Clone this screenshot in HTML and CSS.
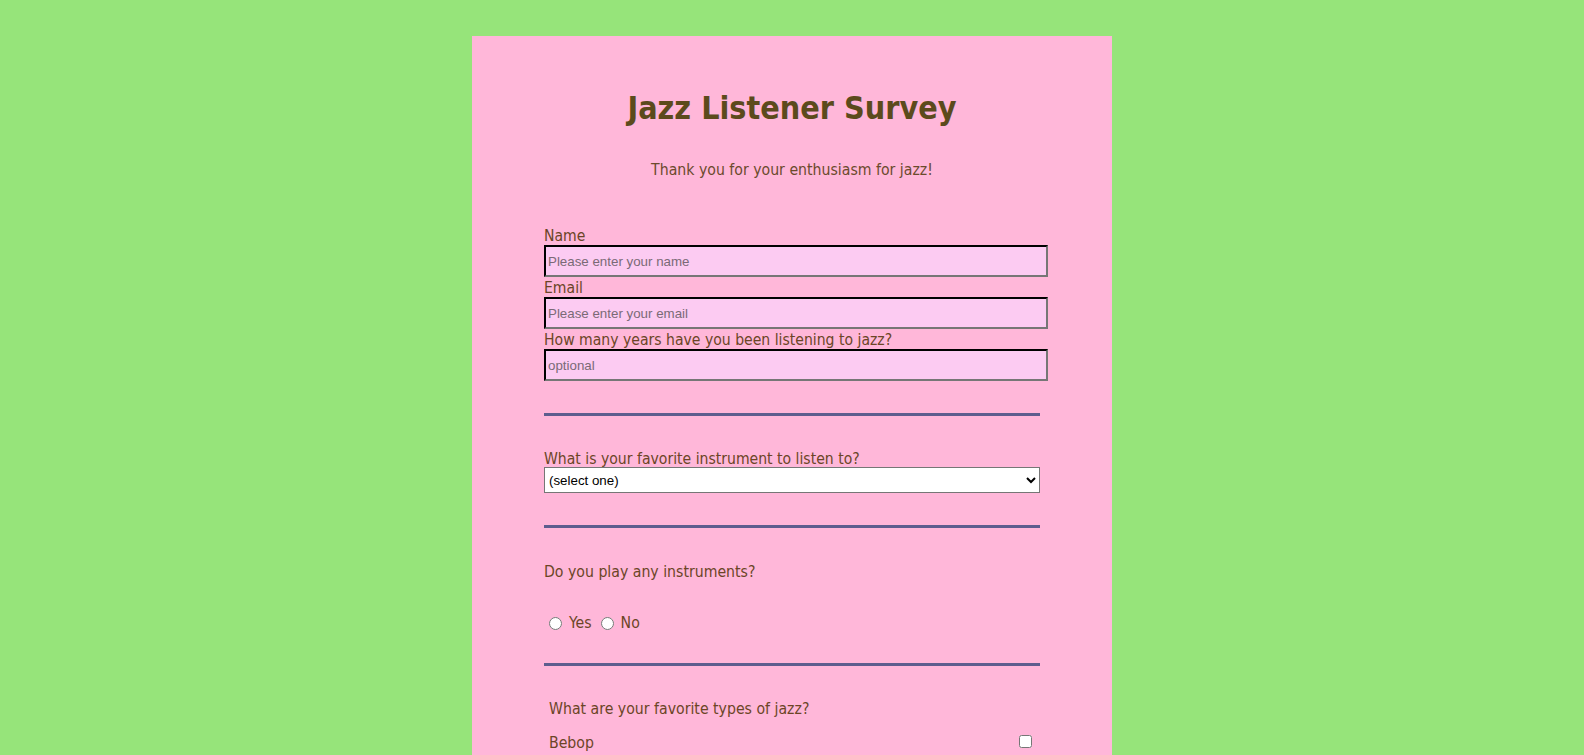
FILE: index.html
```html
<!DOCTYPE html>
<html lang="en">
<head>
<meta charset="utf-8">
<title>Jazz Listener Survey</title>
<link rel="stylesheet" href="styles.css">
</head>
<body>
<main class="card">
  <h1 class="title">Jazz Listener Survey</h1>
  <p class="subtitle">Thank you for your enthusiasm for jazz!</p>
  <form class="survey">
    <label class="label" for="name">Name</label>
    <input class="text-input" id="name" type="text" placeholder="Please enter your name">
    <label class="label" for="email">Email</label>
    <input class="text-input" id="email" type="email" placeholder="Please enter your email">
    <label class="label" for="years">How many years have you been listening to jazz?</label>
    <input class="text-input" id="years" type="number" placeholder="optional">

    <hr class="divider">

    <label class="label" for="instrument">What is your favorite instrument to listen to?</label>
    <select class="select" id="instrument">
      <option>(select one)</option>
      <option>Saxophone</option>
      <option>Trumpet</option>
      <option>Piano</option>
    </select>

    <hr class="divider">

    <p class="question">Do you play any instruments?</p>
    <div class="radio-row">
      <input class="radio" type="radio" name="plays" id="yes"><label class="radio-label" for="yes">Yes</label>
      <input class="radio radio-next" type="radio" name="plays" id="no"><label class="radio-label" for="no">No</label>
    </div>

    <hr class="divider divider-tight">

    <div class="checks">
      <p class="check-title">What are your favorite types of jazz?</p>
      <div class="check-row">
        <label for="bebop">Bebop</label>
        <input class="checkbox" type="checkbox" id="bebop">
      </div>
      <div class="check-row">
        <label for="swing">Swing</label>
        <input class="checkbox" type="checkbox" id="swing">
      </div>
    </div>
  </form>
</main>
</body>
</html>
```

FILE: styles.css
```css
html, body {
  margin: 0;
  padding: 0;
}

body {
  background: #96e47a;
  font-family: "DejaVu Sans Condensed", "DejaVu Sans", Verdana, sans-serif;
  color: #6b4526;
}

.card {
  width: 640px;
  box-sizing: border-box;
  margin: 36px auto 0;
  padding: 52px 72px 40px;
  background: #ffb7d9;
}

.title {
  margin: 0;
  text-align: center;
  font-size: 32px;
  line-height: 40px;
  font-weight: bold;
  color: #5c4a1c;
}

.subtitle {
  margin: 32px 0 0;
  text-align: center;
  font-size: 15.7px;
  line-height: 20px;
  color: #6b4a2c;
}

.survey {
  margin-top: 45px;
  display: flex;
  flex-direction: column;
  align-items: flex-start;
}

.label {
  display: block;
  font-size: 15.6px;
  line-height: 20px;
  padding-top: 1px;
  margin-bottom: -1px;
}

.text-input {
  display: block;
  width: 100%;
  height: 28px;
  margin: 0;
  padding: 0 2px;
  border: 2px inset #767676;
  border-top-color: #222;
  border-left-color: #222;
  background: #fccbf2;
  font-family: "Liberation Sans", Arial, sans-serif;
  font-size: 13.33px;
  color: #222;
  box-sizing: content-box;
}

.text-input::placeholder {
  color: #7a6a76;
}

.divider {
  align-self: stretch;
  border: 0;
  height: 3px;
  margin: 32px 0 31px;
  background: #5d5d8e;
}

.divider + .label {
  padding-top: 2px;
  margin-bottom: -2px;
}

.divider-tight {
  margin-top: 31px;
}

.select {
  display: block;
  align-self: stretch;
  height: 26px;
  margin: 0;
  border: 1px solid #767676;
  border-radius: 0;
  background: #fff;
  font-family: "Liberation Sans", Arial, sans-serif;
  font-size: 13.33px;
  color: #000;
}

.question {
  margin: 3px 0 0;
  font-size: 15.7px;
  line-height: 20px;
}

.radio-row {
  display: flex;
  align-items: center;
  margin-top: 30px;
  height: 20px;
  font-size: 15.7px;
}

.radio {
  width: 13px;
  height: 13px;
  margin: 3px 3px 0 5px;
}

.radio-next {
  margin-left: 9px;
}

.radio-label {
  margin-left: 4px;
}

.checks {
  align-self: stretch;
  padding: 0 5px;
  margin-top: 2px;
}

.check-title {
  margin: 0;
  font-size: 15.7px;
  line-height: 20px;
}

.check-row {
  display: flex;
  justify-content: space-between;
  align-items: center;
  margin-top: 14px;
  font-size: 15.7px;
  line-height: 20px;
}

.checkbox {
  width: 13px;
  height: 13px;
  margin: 0 3px 4px 4px;
}
```
